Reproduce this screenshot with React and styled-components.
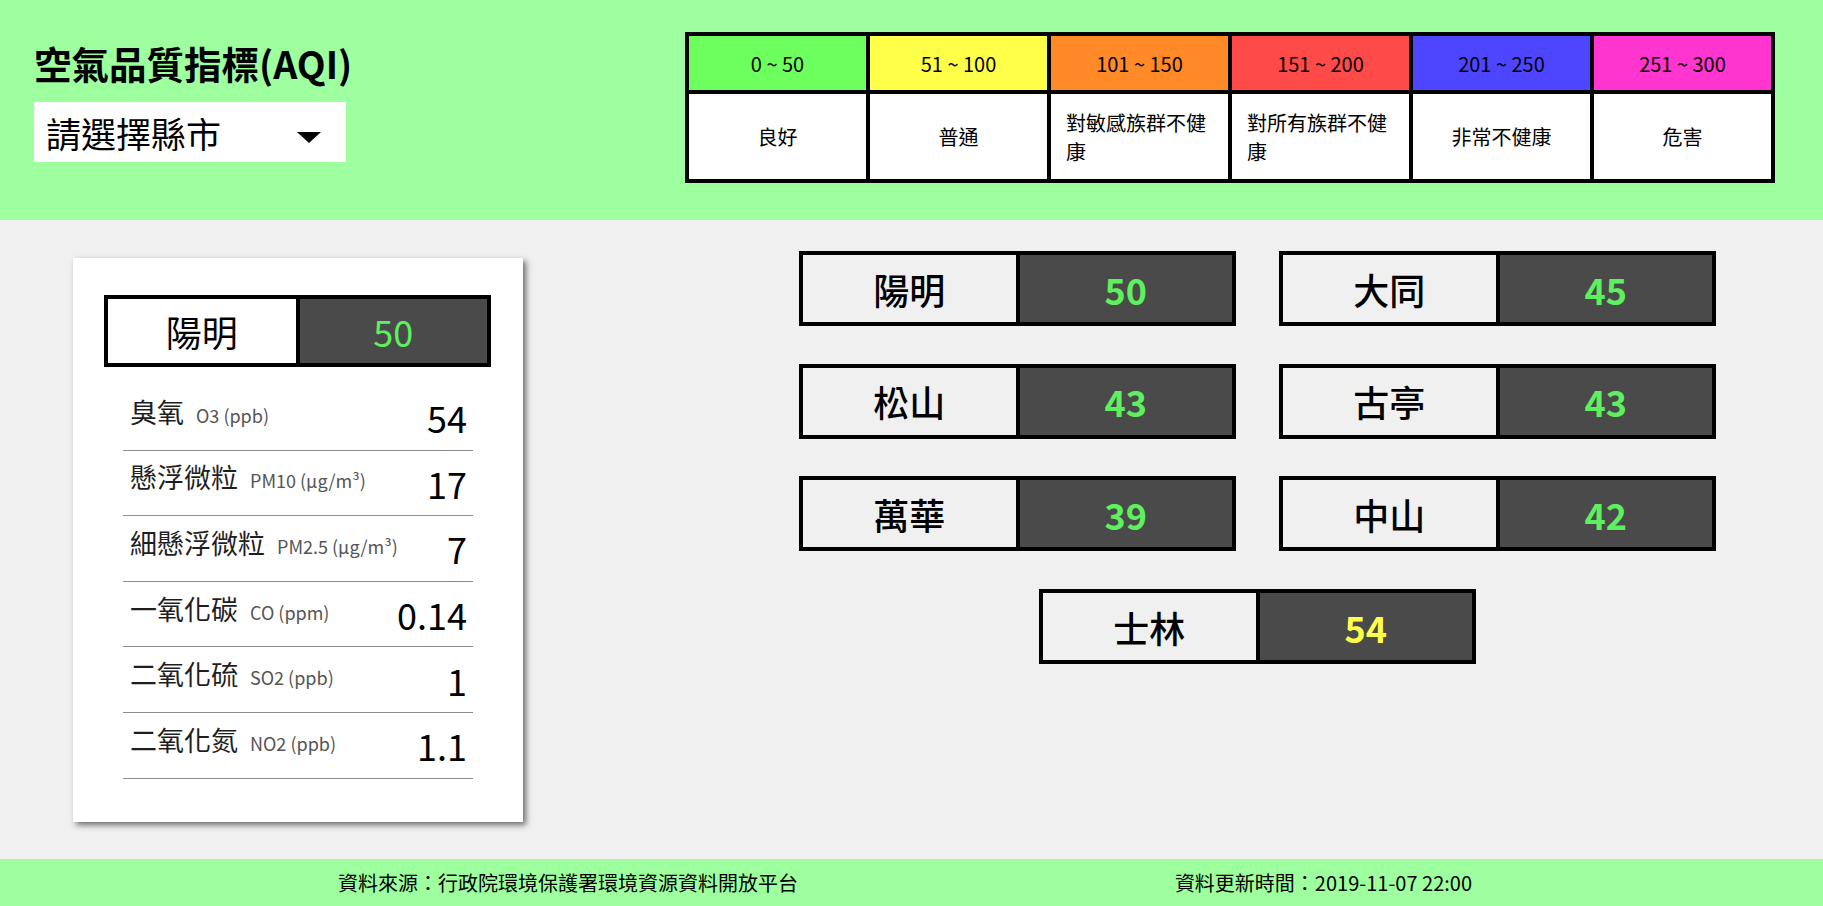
import React from "react";
import styled, { createGlobalStyle } from "styled-components";

const GlobalStyle = createGlobalStyle`
  html, body { margin: 0; padding: 0; }
  body {
    font-family: "Noto Sans CJK TC", "Noto Sans", sans-serif;
    background: #f0f0f0;
    color: #000;
  }
  * { box-sizing: border-box; }
`;

const LEVELS = [
  { range: "0 ~ 50", label: "良好", bg: "#6dff5d", text: "#5ef05e" },
  { range: "51 ~ 100", label: "普通", bg: "#ffff4a", text: "#ffff4a" },
  { range: "101 ~ 150", label: "對敏感族群不健康", bg: "#ff8a27", text: "#ff8a27" },
  { range: "151 ~ 200", label: "對所有族群不健康", bg: "#ff4a4a", text: "#ff4a4a" },
  { range: "201 ~ 250", label: "非常不健康", bg: "#4d45ff", text: "#4d45ff" },
  { range: "251 ~ 300", label: "危害", bg: "#ff35d0", text: "#ff35d0" },
];

const levelOf = (aqi) => LEVELS[Math.min(5, Math.max(0, Math.ceil(aqi / 50) - 1))];

const STATIONS = [
  { name: "陽明", aqi: 50 },
  { name: "大同", aqi: 45 },
  { name: "松山", aqi: 43 },
  { name: "古亭", aqi: 43 },
  { name: "萬華", aqi: 39 },
  { name: "中山", aqi: 42 },
  { name: "士林", aqi: 54 },
];

const POLLUTANTS = [
  { name: "臭氧", unit: "O3 (ppb)", value: "54" },
  { name: "懸浮微粒", unit: "PM10 (μg/m³)", value: "17" },
  { name: "細懸浮微粒", unit: "PM2.5 (μg/m³)", value: "7" },
  { name: "一氧化碳", unit: "CO (ppm)", value: "0.14" },
  { name: "二氧化硫", unit: "SO2 (ppb)", value: "1" },
  { name: "二氧化氮", unit: "NO2 (ppb)", value: "1.1" },
];

const Page = styled.div`
  min-height: 100vh;
  display: flex;
  flex-direction: column;
`;

const Header = styled.header`
  height: 220px;
  background: #9dff9d;
  display: flex;
  justify-content: space-between;
  align-items: flex-start;
  padding: 32px 48px 0 34px;
`;

const Brand = styled.div`
  display: flex;
  flex-direction: column;
`;

const Title = styled.h1`
  margin: 9px 0 0;
  font-size: 37.5px;
  font-weight: 700;
  line-height: 44px;
`;

const SelectWrap = styled.div`
  position: relative;
  width: 312px;
  height: 60px;
  margin-top: 17px;
  background: #fff;
`;

const CitySelect = styled.select`
  appearance: none;
  -webkit-appearance: none;
  width: 100%;
  height: 100%;
  border: none;
  outline: none;
  background: transparent;
  font-family: inherit;
  font-size: 35px;
  color: #000;
  padding: 0 0 0 12px;
`;

const Arrow = styled.span`
  position: absolute;
  left: 263px;
  top: 30px;
  width: 0;
  height: 0;
  border-left: 12.5px solid transparent;
  border-right: 12.5px solid transparent;
  border-top: 11px solid #000;
  pointer-events: none;
`;

const Scale = styled.div`
  display: grid;
  grid-template-columns: repeat(6, 177px);
  grid-template-rows: 54px 85px;
  gap: 4px;
  padding: 4px;
  background: #000;
`;

const ScaleCell = styled.div`
  background: ${(p) => p.$bg};
  display: flex;
  align-items: center;
  justify-content: center;
  padding: 0 15px;
  font-size: 20px;
  line-height: 29px;
  color: #000;
`;

const Main = styled.main`
  flex: 1;
  display: flex;
  align-items: flex-start;
`;

const Card = styled.section`
  width: 450px;
  margin: 38px 0 0 73px;
  background: #fff;
  box-shadow: 3px 3px 6px rgba(0, 0, 0, 0.55);
  padding: 37px 31px 43px;
`;

const StationBox = styled.div`
  display: flex;
  width: ${(p) => (p.$big ? 437 : 387)}px;
  height: ${(p) => (p.$big ? 75 : 72)}px;
  border: 4px solid #000;
`;

const StationName = styled.div`
  flex: 1;
  display: flex;
  align-items: center;
  justify-content: center;
  border-right: 4px solid #000;
  background: ${(p) => (p.$big ? "#f0f0f0" : "#fff")};
  font-size: 36px;
  font-weight: ${(p) => (p.$big ? 500 : 400)};
  line-height: 1;
`;

const StationValue = styled.div`
  flex: 1;
  display: flex;
  align-items: center;
  justify-content: center;
  background: #4a4a4a;
  color: ${(p) => p.$color};
  font-size: 36px;
  font-weight: ${(p) => (p.$big ? 700 : 400)};
  line-height: 1;
`;

const List = styled.ul`
  list-style: none;
  margin: 18px 19px 0;
  padding: 0;
`;

const Row = styled.li`
  display: flex;
  justify-content: space-between;
  align-items: center;
  height: 65.6px;
  border-bottom: 1px solid #8c8c8c;
  padding: 0 6px 0 7px;
`;

const Label = styled.div`
  font-size: 27px;
  line-height: 1;
  color: #1e1e1e;
  padding-bottom: 12px;
  white-space: nowrap;
`;

const Unit = styled.span`
  font-size: 18px;
  color: #555;
  margin-left: 12px;
`;

const Value = styled.div`
  font-size: 36px;
  line-height: 1;
  color: #000;
`;

const StationGrid = styled.div`
  margin: 31px 0 0 276px;
  display: grid;
  grid-template-columns: 437px 437px;
  column-gap: 43px;
  row-gap: 37.7px;
`;

const GridSlot = styled.div`
  grid-column: ${(p) => (p.$wide ? "1 / -1" : "auto")};
  justify-self: center;
`;

const Footer = styled.footer`
  height: 47px;
  background: #9dff9d;
  display: flex;
  align-items: center;
  justify-content: space-between;
  padding: 0 351px 0 338px;
  font-size: 20px;
  color: #000;
`;

function Station({ name, aqi, big }) {
  return (
    <StationBox $big={big}>
      <StationName $big={big}>{name}</StationName>
      <StationValue $big={big} $color={levelOf(aqi).text}>
        {aqi}
      </StationValue>
    </StationBox>
  );
}

export default function App() {
  const featured = STATIONS[0];
  const odd = STATIONS.length % 2 === 1;
  return (
    <Page>
      <GlobalStyle />
      <Header>
        <Brand>
          <Title>空氣品質指標(AQI)</Title>
          <SelectWrap>
            <CitySelect defaultValue="">
              <option value="">請選擇縣市</option>
              <option value="taipei">臺北市</option>
            </CitySelect>
            <Arrow />
          </SelectWrap>
        </Brand>
        <Scale>
          {LEVELS.map((l) => (
            <ScaleCell key={l.range} $bg={l.bg}>
              {l.range}
            </ScaleCell>
          ))}
          {LEVELS.map((l) => (
            <ScaleCell key={l.label} $bg="#fff">
              {l.label}
            </ScaleCell>
          ))}
        </Scale>
      </Header>
      <Main>
        <Card>
          <Station name={featured.name} aqi={featured.aqi} />
          <List>
            {POLLUTANTS.map((p) => (
              <Row key={p.name}>
                <Label>
                  {p.name}
                  <Unit>{p.unit}</Unit>
                </Label>
                <Value>{p.value}</Value>
              </Row>
            ))}
          </List>
        </Card>
        <StationGrid>
          {STATIONS.map((s, i) => (
            <GridSlot key={s.name} $wide={odd && i === STATIONS.length - 1}>
              <Station name={s.name} aqi={s.aqi} big />
            </GridSlot>
          ))}
        </StationGrid>
      </Main>
      <Footer>
        <span>資料來源：行政院環境保護署環境資源資料開放平台</span>
        <span>資料更新時間：2019-11-07 22:00</span>
      </Footer>
    </Page>
  );
}
